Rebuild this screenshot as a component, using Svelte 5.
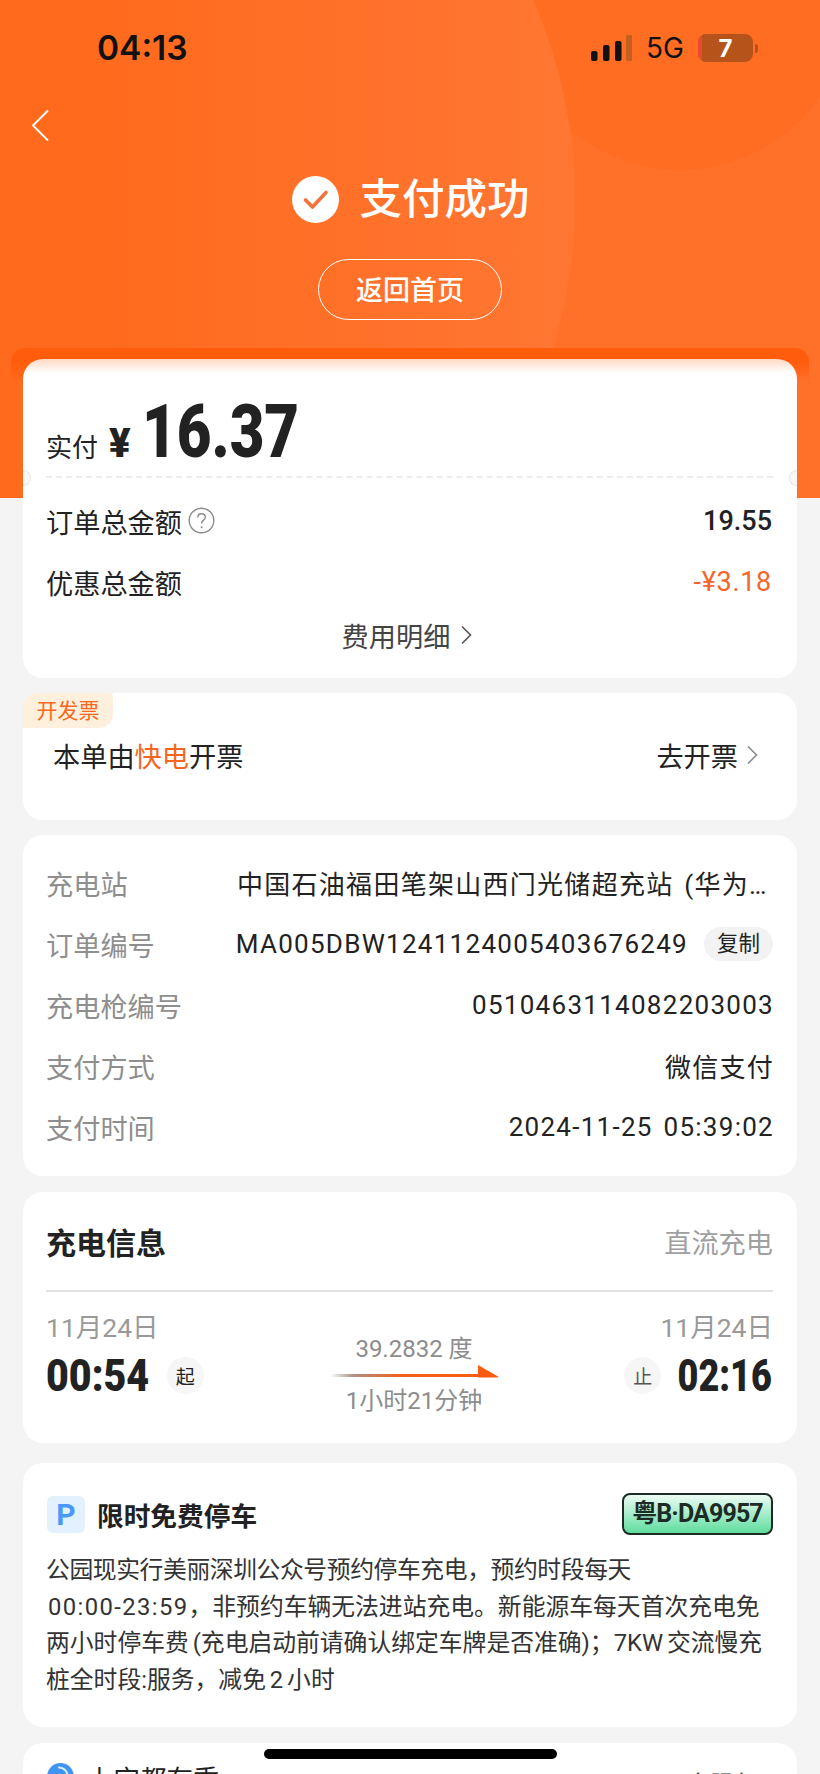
<script lang="ts">
	const details = [
		{ label: '充电站', value: '中国石油福田笔架山西门光储超充站 (华为充电站)' },
		{ label: '订单编号', value: 'MA005DBW1241124005403676249', copy: true },
		{ label: '充电枪编号', value: '0510463114082203003' },
		{ label: '支付方式', value: '微信支付' },
		{ label: '支付时间', value: '2024-11-25 05:39:02' }
	];
</script>

<div class="page">
	<header class="hero">
		<div class="glow-corner"></div>
		<div class="glow-big"></div>

		<div class="status">
			<span class="clock">04:13</span>
			<div class="status-right">
				<svg class="signal" width="41" height="26" viewBox="0 0 41 26">
					<rect x="0" y="16" width="6.5" height="10" rx="2" fill="#111" />
					<rect x="12" y="10" width="6.5" height="16" rx="2" fill="#111" />
					<rect x="24" y="6" width="6.5" height="20" rx="2" fill="#111" />
					<rect x="35" y="0" width="6.5" height="26" rx="1.5" fill="#c4601f" />
				</svg>
				<span class="net">5G</span>
				<div class="battery"><span>7</span></div>
				<div class="battery-nub"></div>
			</div>
		</div>

		<button class="back" aria-label="返回">
			<svg width="19" height="33" viewBox="0 0 19 33" fill="none">
				<path d="M17 1.5 2 16.5 17 31.500" stroke="#fff" stroke-width="1.8" stroke-linejoin="round" />
			</svg>
		</button>

		<div class="result">
			<svg width="47" height="47" viewBox="0 0 47 47">
				<circle cx="23.500" cy="23.500" r="23.500" fill="#fff" />
				<path d="M13.500 24 20.500 31 34 16.500" fill="none" stroke="#f4713a" stroke-width="3.600" stroke-linecap="round" stroke-linejoin="round" />
			</svg>
			<h1>支付成功</h1>
		</div>
		<button class="home">返回首页</button>
	</header>

	<main class="cards">
		<div class="band"></div>

		<section class="card paid">
			<div class="paid-head">
				<span class="paid-label">实付</span>
				<span class="paid-yen">¥</span>
				<span class="paid-num">16.37</span>
			</div>
			<div class="notch left"></div>
			<div class="notch right"></div>
			<div class="sums">
				<div class="sum-row">
					<span class="sum-label">订单总金额
						<svg width="27" height="27" viewBox="0 0 27 27" fill="none">
							<circle cx="13.500" cy="13.500" r="12.300" stroke="#8a8a8a" stroke-width="1.400" />
							<path d="M9.800 10.500c0-2.300 1.700-3.700 3.800-3.700s3.700 1.400 3.700 3.400c0 2.900-3.700 3-3.700 6.200" stroke="#8a8a8a" stroke-width="1.400" />
							<circle cx="13.600" cy="20.300" r="1" fill="#8a8a8a" />
						</svg>
					</span>
					<span class="sum-num">19.55</span>
				</div>
				<div class="sum-row">
					<span class="sum-label">优惠总金额</span>
					<span class="sum-num off">-¥3.18</span>
				</div>
			</div>
			<div class="fee-link">
				费用明细
				<svg width="11" height="20" viewBox="0 0 11 20" fill="none">
					<path d="M1 1.500 9.500 10 1 18.500" stroke="#555" stroke-width="1.600" />
				</svg>
			</div>
		</section>

		<section class="card invoice">
			<div class="invoice-tag">开发票</div>
			<div class="invoice-row">
				<span>本单由<em>快电</em>开票</span>
				<span class="invoice-go">去开票
					<svg width="11" height="20" viewBox="0 0 11 20" fill="none">
						<path d="M1 1.500 9.500 10 1 18.500" stroke="#8a8a8a" stroke-width="1.600" />
					</svg>
				</span>
			</div>
		</section>

		<section class="card info">
			{#each details as row}
				<div class="info-row">
					<span class="info-label">{row.label}</span>
					<span class="info-value">{row.value}</span>
					{#if row.copy}<span class="copy">复制</span>{/if}
				</div>
			{/each}
		</section>

		<section class="card charge">
			<div class="charge-head">
				<h2>充电信息</h2>
				<span>直流充电</span>
			</div>
			<div class="charge-body">
				<div class="end">
					<div class="date">11月24日</div>
					<div class="time-line">
						<span class="time">00:54</span>
						<span class="dot">起</span>
					</div>
				</div>
				<div class="mid">
					<div class="mid-text">39.2832 度</div>
					<svg class="arrow" width="168" height="22" viewBox="0 0 168 22">
						<defs>
							<linearGradient id="arrow-fade" x1="0" x2="1" y1="0" y2="0">
								<stop offset="0" stop-color="#8c8c8c" stop-opacity="0" />
								<stop offset="0.15" stop-color="#b09080" />
								<stop offset="0.45" stop-color="#f4601a" />
								<stop offset="1" stop-color="#f95c10" />
							</linearGradient>
						</defs>
						<rect x="0" y="10" width="160" height="3" fill="url(#arrow-fade)" />
						<path d="M148 1 168 12.500v1H148z" fill="#f95c10" />
					</svg>
					<div class="mid-text">1小时21分钟</div>
				</div>
				<div class="end stop">
					<div class="date">11月24日</div>
					<div class="time-line">
						<span class="dot">止</span>
						<span class="time">02:16</span>
					</div>
				</div>
			</div>
		</section>

		<section class="card parking">
			<div class="parking-head">
				<span class="p-icon">P</span>
				<h3>限时免费停车</h3>
				<span class="plate">粤B·DA9957</span>
			</div>
			<p><span class="tight">公园现实行美丽深圳公众号预约停车充电，预约时段每天</span><br /><span class="digits">00:00-23:59</span>，非预约车辆无法进站充电。新能源车每天首次充电免<br />两小时停车费 (充电启动前请确认绑定车牌是否准确)；7KW 交流慢充<br />桩全时段:服务，减免 2 小时</p>
		</section>

		<section class="card more">
			<svg class="more-icon" width="27" height="27" viewBox="0 0 27 27" fill="none">
				<circle cx="13.500" cy="13.500" r="13.500" fill="#3f95f2" />
				<path d="M12 4.500c5 .5 8 3.500 8.500 8" stroke="#d8ecff" stroke-width="2" stroke-linecap="round" />
			</svg>
			<h3>上宝都有秀</h3>
			<span class="more-link">更多服务</span>
		</section>
	</main>

	<div class="home-bar"></div>
</div>

<style>
	:global(body) {
		margin: 0;
		background: #f4f4f4;
	}

	.page {
		position: relative;
		width: 820px;
		height: 1774px;
		overflow: hidden;
		background: #f4f4f4;
		color: #222;
		font-family: Roboto, 'Noto Sans CJK SC', sans-serif;
		font-size: 27.200px;
	}

	h1, h2, h3, p {
		margin: 0;
		font: inherit;
	}

	button {
		font: inherit;
		background: none;
		padding: 0;
		cursor: pointer;
	}

	.hero {
		position: relative;
		height: 498px;
		overflow: hidden;
		background: #ff7029;
	}

	.glow-big {
		position: absolute;
		left: -425px;
		top: -300px;
		width: 1000px;
		height: 1000px;
		border-radius: 50%;
		background: linear-gradient(90deg, #ff6a1c 0%, #ff6a1c 50%, #ff6f26 72%, #ff7733 100%);
	}

	.glow-corner {
		position: absolute;
		left: 510px;
		top: -170px;
		width: 340px;
		height: 340px;
		border-radius: 50%;
		background: #ff6d22;
	}

	.status {
		position: relative;
		display: flex;
		justify-content: space-between;
		align-items: center;
		height: 28px;
		padding: 34px 62px 0 97px;
	}

	.clock {
		font-family: Inter, sans-serif;
		font-size: 33.500px;
		font-weight: 600;
		color: #111;
	}

	.status-right {
		display: flex;
		align-items: center;
	}

	.net {
		margin-left: 14px;
		font-family: Inter, sans-serif;
		font-size: 28px;
		color: #111;
	}

	.battery {
		display: flex;
		align-items: center;
		justify-content: center;
		width: 55px;
		height: 28px;
		margin-left: 14px;
		border-radius: 8px;
		background: linear-gradient(90deg, #e84a2f 0 4px, #b5531b 4px);
		box-sizing: border-box;
		color: #fff;
		font-family: Inter, sans-serif;
		font-size: 24px;
		font-weight: 700;
	}

	.battery-nub {
		width: 3px;
		height: 9px;
		margin-left: 2px;
		border-radius: 0 3px 3px 0;
		background: #b5531b;
	}

	.back {
		position: relative;
		display: block;
		margin: 47px 0 0 31px;
		border: none;
		line-height: 0;
	}

	.result {
		position: relative;
		display: flex;
		align-items: center;
		justify-content: center;
		gap: 20px;
		margin-top: 34px;
		padding-left: 2px;
		color: #fff;
	}

	.result h1 {
		font-size: 42.500px;
		font-weight: 500;
		line-height: 47px;
	}

	.home {
		position: relative;
		display: block;
		width: 184px;
		height: 61px;
		margin: 36px auto 0;
		padding-bottom: 3px;
		border: 1.500px solid #fff;
		border-radius: 31px;
		color: #fff;
		font-size: 27px;
		font-weight: 500;
	}

	.cards {
		position: relative;
		display: flex;
		flex-direction: column;
		gap: 15px;
		margin-top: -139px;
		padding: 0 23px;
	}

	.band {
		position: absolute;
		left: 11px;
		right: 11px;
		top: -11px;
		height: 34px;
		border-radius: 14px 14px 0 0;
		background: linear-gradient(180deg, #ff5c0c 0 40%, rgba(255, 92, 12, 0));
	}

	.card {
		position: relative;
		border-radius: 20px;
		background: #fff;
	}

	.paid {
		height: 319px;
		background: linear-gradient(180deg, #ffd9c2 0, #fff 14px);
	}

	.paid-head {
		display: flex;
		align-items: baseline;
		box-sizing: border-box;
		height: 119px;
		margin: 0 24px 0 23px;
		padding-top: 39px;
		border-bottom: 2px dashed #ececec;
	}

	.paid-label {
		font-size: 26px;
		line-height: 68px;
	}

	.paid-yen {
		margin-left: 11px;
		font-size: 40px;
		font-weight: 900;
	}

	.paid-num {
		display: inline-block;
		margin-left: 11px;
		font-size: 74px;
		line-height: 68px;
		font-weight: 900;
		transform: scaleX(0.81);
		transform-origin: left;
	}

	.notch {
		position: absolute;
		top: 111px;
		width: 8px;
		height: 16px;
		border: 1px solid #e6e6e6;
		background: #f8f8f8;
		box-sizing: border-box;
	}

	.notch.left {
		left: 0;
		border-left: none;
		border-radius: 0 8px 8px 0;
	}

	.notch.right {
		right: 0;
		border-right: none;
		border-radius: 8px 0 0 8px;
	}

	.sums {
		margin-top: 12px;
	}

	.sum-row {
		display: flex;
		justify-content: space-between;
		align-items: center;
		height: 61px;
		padding: 0 25px 0 23px;
	}

	.sum-label {
		display: flex;
		align-items: center;
		gap: 6px;
	}

	.sum-num {
		font-size: 27px;
		font-weight: 500;
	}

	.sum-num.off {
		color: #f4652a;
		font-weight: 400;
		letter-spacing: 0.7px;
	}

	.fee-link {
		display: flex;
		align-items: center;
		justify-content: center;
		gap: 11px;
		height: 46px;
		padding-right: 6px;
		color: #444;
	}

	.invoice {
		height: 127px;
	}

	.invoice-tag {
		position: absolute;
		left: 0;
		top: 0;
		display: flex;
		align-items: center;
		justify-content: center;
		box-sizing: border-box;
		width: 90px;
		height: 35px;
		padding-bottom: 3px;
		border-radius: 14px 4px 14px 0;
		background: #fef0dc;
		color: #f4691f;
		font-size: 21px;
	}

	.invoice-row {
		display: flex;
		justify-content: space-between;
		align-items: center;
		height: 61px;
		padding: 31px 39px 0 30px;
	}

	.invoice-row em {
		font-style: normal;
		color: #f4651f;
	}

	.invoice-go {
		display: flex;
		align-items: center;
		gap: 9px;
	}

	.info {
		padding: 17px 24px 19px 23px;
	}

	.info-row {
		display: flex;
		align-items: center;
		justify-content: space-between;
		height: 61px;
	}

	.info-label {
		flex: none;
		color: #8e8e8e;
	}

	.info-value {
		flex: 0 1 auto;
		max-width: 537px;
		min-width: 0;
		margin-left: auto;
		margin-right: -1px;
		overflow: hidden;
		white-space: nowrap;
		text-overflow: ellipsis;
		font-size: 26px;
		letter-spacing: 1.280px;
		word-spacing: 3px;
	}

	.copy {
		flex: none;
		margin-left: 17px;
		padding: 0 13px;
		border-radius: 17px;
		background: #f2f2f2;
		font-size: 21.500px;
		line-height: 34px;
	}

	.charge {
		height: 251px;
		margin-top: 1px;
		padding: 0 24px 0 23px;
	}

	.charge-head {
		display: flex;
		justify-content: space-between;
		align-items: center;
		height: 100px;
		border-bottom: 2px solid #e2e2e2;
		box-sizing: border-box;
		color: #a0a0a0;
	}

	.charge-head h2 {
		font-size: 30px;
		font-weight: 700;
		color: #222;
	}

	.charge-body {
		display: flex;
		justify-content: space-between;
		padding-top: 18px;
	}

	.date {
		height: 36px;
		line-height: 36px;
		font-size: 26.500px;
		color: #999;
	}

	.stop {
		text-align: right;
	}

	.time-line {
		display: flex;
		align-items: center;
		height: 50px;
		margin-top: 4px;
	}

	.time {
		font-size: 45px;
		font-weight: 900;
		white-space: nowrap;
		transform: scaleX(0.875);
		transform-origin: left;
	}

	.stop .time {
		margin: 0 1px 0 -7px;
		transform: scaleX(0.8);
		transform-origin: right;
	}

	.stop .time-line {
		justify-content: flex-end;
	}

	.dot {
		display: flex;
		align-items: center;
		justify-content: center;
		width: 37px;
		height: 37px;
		margin-left: 3px;
		border-radius: 50%;
		background: #f6f6f6;
		font-size: 19px;
	}

	.stop .dot {
		margin-left: 0;
		color: #555;
	}

	.mid {
		display: flex;
		flex-direction: column;
		align-items: center;
		padding-top: 24px;
	}

	.mid-text {
		height: 30px;
		line-height: 30px;
		font-size: 24px;
		color: #8c8c8c;
		white-space: nowrap;
	}

	.arrow {
		display: block;
	}

	.parking {
		margin-top: 5px;
		padding: 30px 24px 29px 23px;
	}

	.parking-head {
		display: flex;
		align-items: center;
		height: 42px;
		margin-bottom: 17px;
	}

	.p-icon {
		display: flex;
		align-items: center;
		justify-content: center;
		width: 38px;
		height: 37px;
		margin: 0 12px 0 1px;
		border-radius: 6px;
		background: #e3f1ff;
		color: #4a9af5;
		font-size: 30px;
		font-weight: 700;
	}

	.parking-head h3 {
		flex: 1;
		font-size: 26.700px;
		font-weight: 700;
	}

	.plate {
		box-sizing: border-box;
		width: 151px;
		height: 42px;
		border: 2px solid #1d2b26;
		border-radius: 8px;
		background: linear-gradient(180deg, #eefcf4 0%, #5fdc9e 100%);
		font-size: 25px;
		font-weight: 700;
		line-height: 37px;
		letter-spacing: -0.9px;
		text-align: center;
		color: #1d2b26;
		white-space: nowrap;
	}

	.parking p {
		font-size: 23.800px;
		line-height: 36.500px;
		color: #333;
		white-space: nowrap;
		word-spacing: -2px;
	}

	.tight {
		letter-spacing: -0.4px;
	}

	.digits {
		margin-left: 2px;
		letter-spacing: 1.400px;
	}

	.more {
		display: flex;
		align-items: flex-start;
		height: 90px;
		margin-top: 1px;
		padding: 20px 24px 0;
		box-sizing: border-box;
	}

	.more-icon {
		margin-right: 13px;
	}

	.more h3 {
		flex: 1;
		font-size: 26.500px;
		line-height: 34px;
	}

	.more-link {
		padding: 4px 18px 0 0;
		color: #333;
		font-size: 22.500px;
		line-height: 34px;
	}

	.home-bar {
		position: absolute;
		left: 264px;
		top: 1749px;
		width: 293px;
		height: 10px;
		border-radius: 5px;
		background: #000;
	}
</style>
